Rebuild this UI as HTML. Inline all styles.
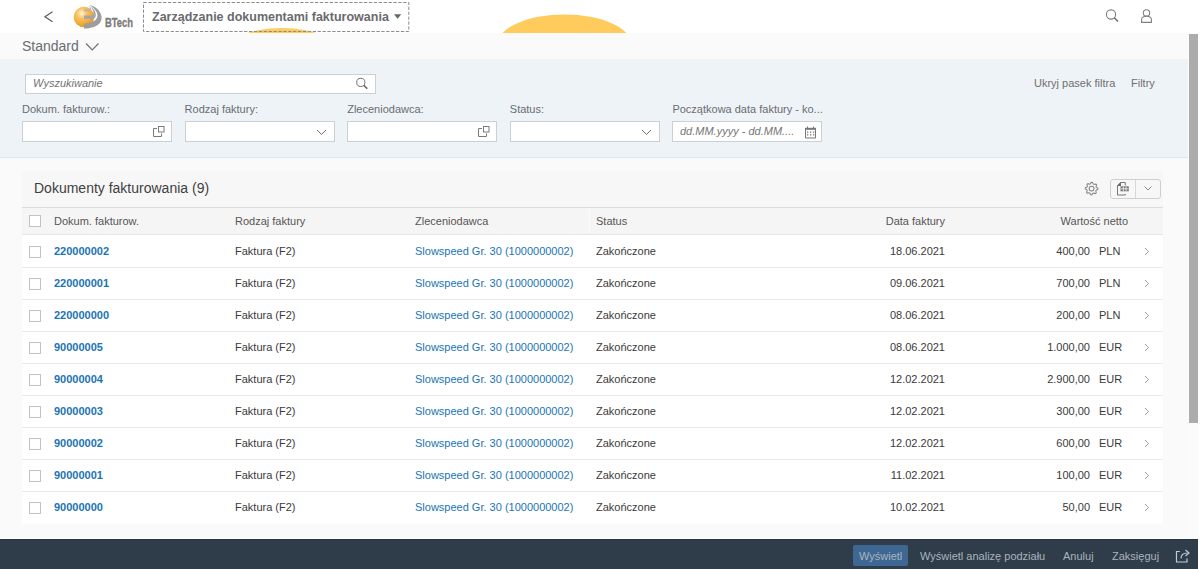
<!DOCTYPE html>
<html><head><meta charset="utf-8">
<style>
*{box-sizing:border-box;margin:0;padding:0}
html,body{width:1200px;height:569px;overflow:hidden;background:#fff;font-family:"Liberation Sans",sans-serif;color:#333}
.abs{position:absolute}
#hdr{position:absolute;left:0;top:0;width:1200px;height:33px;background:#fff;overflow:hidden}
#sub{position:absolute;left:0;top:33px;width:1188px;height:26px;background:#fafafa}
#fb{position:absolute;left:0;top:59px;width:1188px;height:99px;background:#eef3f8;border-bottom:1px solid #dde6ef}
#content{position:absolute;left:0;top:158px;width:1188px;height:382px;background:#fafafa}
#sbtrack{position:absolute;left:1188px;top:33px;width:10px;height:507px;background:#fbfbfb}
#sb{position:absolute;left:1189px;top:34px;width:9px;height:389px;background:#acacac}
.inp{position:absolute;height:21px;background:#fff;border:1px solid #cbd0d5}
.lbl{position:absolute;font-size:11px;color:#6a6d70;white-space:nowrap}
#tbl{position:absolute;left:22px;top:171px;width:1141px;height:352px;background:#fff}
#tbar{position:absolute;left:0;top:0;width:1141px;height:37px;background:#f7f7f7;border-bottom:1px solid #dcdcdc}
.row{position:absolute;left:0;width:1141px;height:32px;border-bottom:1px solid #e9e9e9;background:#fff}
.hrow{position:absolute;left:0;top:37px;width:1141px;height:27px;background:#f5f5f5;border-bottom:1px solid #e5e5e5}
.cb{position:absolute;left:7px;width:12px;height:12px;border:1px solid #c2c2c2;background:#fff}
.c{position:absolute;font-size:11px;white-space:nowrap;color:#3a3a3a}
.h{color:#555}
.lnk{color:#1b74b5}
.b{font-weight:bold}
.r{text-align:right}
#ftr{position:absolute;left:0;top:539px;width:1198px;height:30px;background:#2f3c49;border-top:1px solid #27343f}
.fbtn{position:absolute;top:6px;height:20px;line-height:20px;font-size:11px;color:#a8b4bf;white-space:nowrap}
</style></head><body>

<div id="hdr">
  <svg class="abs" style="left:0;top:0" width="1200" height="33" viewBox="0 0 1200 33">
    <ellipse cx="281.75" cy="59" rx="63" ry="31" fill="#fecb5c"/>
    <ellipse cx="564.5" cy="45.4" rx="67.6" ry="31" fill="#fecb5c"/>
  </svg>
  <svg class="abs" style="left:40px;top:8px" width="16" height="16" viewBox="0 0 16 16"><path d="M12.5 3.7 L5 8.7 L12.5 13.7" fill="none" stroke="#5f5f5f" stroke-width="1.3"/></svg>
  <svg class="abs" style="left:70px;top:0px" width="70" height="33" viewBox="0 0 70 33">
    <defs><radialGradient id="g1" cx="0.38" cy="0.33" r="0.75"><stop offset="0" stop-color="#fff3d6"/><stop offset="0.35" stop-color="#f9c15a"/><stop offset="0.8" stop-color="#eda12a"/><stop offset="1" stop-color="#e39420"/></radialGradient></defs>
    <circle cx="14" cy="17" r="10.3" fill="url(#g1)"/>
    <path d="M14 23.5 C20 23.5 26 21.5 27.3 17 C28.3 13 25 8 19 5 C27 6.5 31.6 12 31.6 18 C31.6 24.5 24 28.6 14 28.6 Z" fill="#9d9d9d"/>
    <path d="M14 15.4 L22.5 15.4 C24 14 24 10.5 20.5 6.5 C24.5 9 26.2 12.5 25.8 15.5 C25.5 17.5 24.5 19 22.5 19 L14 19 Z" fill="#a6a6a6"/>
    <path d="M14 9.6 L19 9.6 C20 8.5 20 7 19 5.5 C21 7 21.7 9.5 20.5 11.2 L14 11.2 Z" fill="#b5b5b5"/>
    <text x="35" y="27" font-family="Liberation Sans" font-weight="bold" font-size="13.2" fill="#7b7b7b" stroke="#7b7b7b" stroke-width="0.35" textLength="28" lengthAdjust="spacingAndGlyphs">BTech</text>
  </svg>
  <svg class="abs" style="left:143px;top:2px" width="268" height="31" viewBox="0 0 268 31"><rect x="0.5" y="0.5" width="265.3" height="29" fill="none" stroke="#8c8c8c" stroke-width="1" stroke-dasharray="3.3 1.6"/></svg>
  <div class="abs" style="left:152px;top:10px;font-size:12.5px;font-weight:bold;color:#6a6a6e;white-space:nowrap">Zarządzanie dokumentami fakturowania</div>
  <svg class="abs" style="left:393.5px;top:13.5px" width="8" height="6" viewBox="0 0 8 6"><path d="M0 0.3 H7.2 L3.6 4.8 Z" fill="#666"/></svg>
  <svg class="abs" style="left:1100px;top:4px" width="24" height="24" viewBox="0 0 24 24"><circle cx="11" cy="10.5" r="4.6" fill="none" stroke="#808080" stroke-width="1.1"/><path d="M14.3 13.8 L18 17.5" stroke="#707070" stroke-width="1.6"/></svg>
  <svg class="abs" style="left:1135px;top:4px" width="24" height="24" viewBox="0 0 24 24"><circle cx="11.5" cy="8.9" r="3.2" fill="none" stroke="#808080" stroke-width="1.1"/><path d="M6.6 18.4 V15.5 C6.6 13.3 8.6 12.2 11.5 12.2 C14.4 12.2 16.4 13.3 16.4 15.5 V18.4 Z" fill="none" stroke="#808080" stroke-width="1.1"/></svg>
</div>

<div id="sub">
  <div class="abs" style="left:22px;top:5px;font-size:14px;color:#6a6d70">Standard</div>
  <svg class="abs" style="left:85px;top:9px" width="15" height="10" viewBox="0 0 15 10"><path d="M1 1.5 L7.25 8 L13.5 1.5" fill="none" stroke="#6f6f6f" stroke-width="1.1"/></svg>
</div>

<div id="fb">
  <div class="inp" style="left:25px;top:15px;width:351px;height:20px"></div>
  <div class="lbl" style="left:33px;top:18px;font-style:italic;color:#747474">Wyszukiwanie</div>
  <svg class="abs" style="left:354px;top:17px" width="16" height="16" viewBox="0 0 16 16"><circle cx="6.8" cy="6.4" r="4.1" fill="none" stroke="#707070" stroke-width="1"/><path d="M9.7 9.3 L13.3 12.8" stroke="#606060" stroke-width="1.5"/></svg>
  <div class="lbl" style="left:1034px;top:18px;color:#707070">Ukryj pasek filtra</div>
  <div class="lbl" style="left:1131px;top:18px;color:#707070">Filtry</div>
  <div class="lbl" style="left:22.0px;top:44px">Dokum. fakturow.:</div>
  <div class="lbl" style="left:184.6px;top:44px">Rodzaj faktury:</div>
  <div class="lbl" style="left:347.2px;top:44px">Zleceniodawca:</div>
  <div class="lbl" style="left:509.8px;top:44px">Status:</div>
  <div class="lbl" style="left:672.4px;top:44px">Początkowa data faktury - ko...</div>
  <div class="inp" style="left:22.0px;top:62px;width:150px"><svg class="abs" style="left:129px;top:2.7px" width="14" height="13" viewBox="0 0 14 13"><rect x="6.5" y="1.5" width="5.5" height="5.5" fill="none" stroke="#7a7a7a" stroke-width="1"/><path d="M5 3.5 H1.5 V11.5 H9.5 V8.5" fill="none" stroke="#7a7a7a" stroke-width="1"/></svg></div>
  <div class="inp" style="left:184.6px;top:62px;width:150px"><svg class="abs" style="left:130.3px;top:5.7px" width="12" height="9" viewBox="0 0 12 9"><path d="M1 2 L5.5 6.4 L10 2" fill="none" stroke="#6f6f6f" stroke-width="1"/></svg></div>
  <div class="inp" style="left:347.2px;top:62px;width:150px"><svg class="abs" style="left:129px;top:2.7px" width="14" height="13" viewBox="0 0 14 13"><rect x="6.5" y="1.5" width="5.5" height="5.5" fill="none" stroke="#7a7a7a" stroke-width="1"/><path d="M5 3.5 H1.5 V11.5 H9.5 V8.5" fill="none" stroke="#7a7a7a" stroke-width="1"/></svg></div>
  <div class="inp" style="left:509.8px;top:62px;width:150px"><svg class="abs" style="left:130.3px;top:5.7px" width="12" height="9" viewBox="0 0 12 9"><path d="M1 2 L5.5 6.4 L10 2" fill="none" stroke="#6f6f6f" stroke-width="1"/></svg></div>
  <div class="inp" style="left:672.4px;top:62px;width:150px"><svg class="abs" style="left:130.5px;top:2.5px" width="13" height="14" viewBox="0 0 13 14"><path d="M1.5 3.5 H11.5 V13 H1.5 Z" fill="none" stroke="#777" stroke-width="1"/><rect x="1" y="2.8" width="11" height="2" fill="#777"/><path d="M3.5 1.5 V3 M9.5 1.5 V3" stroke="#777" stroke-width="1"/><g fill="#777"><rect x="3" y="6.5" width="1.3" height="1.3"/><rect x="6" y="6.5" width="1.3" height="1.3"/><rect x="9" y="6.5" width="1.3" height="1.3"/><rect x="3" y="9.2" width="1.3" height="1.3"/><rect x="6" y="9.2" width="1.3" height="1.3"/><rect x="9" y="9.2" width="1.3" height="1.3"/></g></svg></div>
  <div class="lbl" style="left:680px;top:66px;font-style:italic;color:#767676">dd.MM.yyyy - dd.MM....</div>
</div>

<div id="content"></div>
<div id="sbtrack"></div>
<div id="sb"></div>
<div id="tbl">
  <div id="tbar">
    <div class="abs" style="left:12px;top:9px;font-size:14px;color:#3f3f3f">Dokumenty fakturowania (9)</div>
    <svg class="abs" style="left:1058px;top:7px" width="24" height="22" viewBox="0 0 24 22"><path d="M11.29 4.31 L12.52 4.37 L13.25 5.99 L14.12 6.40 L15.83 5.93 L16.66 6.85 L16.03 8.50 L16.35 9.41 L17.89 10.29 L17.83 11.52 L16.21 12.25 L15.80 13.12 L16.27 14.83 L15.35 15.66 L13.70 15.03 L12.79 15.35 L11.91 16.89 L10.68 16.83 L9.95 15.21 L9.08 14.80 L7.37 15.27 L6.54 14.35 L7.17 12.70 L6.85 11.79 L5.31 10.91 L5.37 9.68 L6.99 8.95 L7.40 8.08 L6.93 6.37 L7.85 5.54 L9.50 6.17 L10.41 5.85 Z" fill="none" stroke="#858585" stroke-width="1.05" stroke-linejoin="round"/><circle cx="11.6" cy="10.6" r="2.4" fill="none" stroke="#858585" stroke-width="1.1"/></svg>
    <div class="abs" style="left:1088px;top:8px;width:51px;height:20px;border:1px solid #cfcfcf;border-radius:3px;background:#f7f7f7"></div>
    <div class="abs" style="left:1113px;top:9px;width:1px;height:18px;background:#d8d8d8"></div>
    <svg class="abs" style="left:1094px;top:10px" width="16" height="16" viewBox="0 0 16 16">
      <path d="M1.5 4.5 L4.5 1.5 H9.3 V4.5 M9.3 13 V14 H1.5 V4.5" fill="none" stroke="#777" stroke-width="1"/>
      <path d="M1 5 L5 1 V5 Z" fill="#6e6e6e"/>
      <rect x="4.5" y="5.3" width="8.3" height="5" fill="#777"/>
      <g stroke="#f7f7f7" stroke-width="0.8"><path d="M4.8 7.8 H12.5 M7.3 5.5 V10.2 M10 5.5 V10.2"/></g>
    </svg>
    <svg class="abs" style="left:1121px;top:13px" width="10" height="8" viewBox="0 0 10 8"><path d="M1.5 2.5 L5 6 L8.5 2.5" fill="none" stroke="#888" stroke-width="1"/></svg>
  </div>
  <div class="hrow">
    <div class="cb" style="top:7px"></div>
    <div class="c h" style="left:32px;top:7px">Dokum. fakturow.</div>
    <div class="c h" style="left:213px;top:7px">Rodzaj faktury</div>
    <div class="c h" style="left:393px;top:7px">Zleceniodawca</div>
    <div class="abs" style="left:567px;top:1px;width:1px;height:25px;background:#fcfcfc"></div>
    <div class="c h" style="left:574px;top:7px">Status</div>
    <div class="c h r" style="left:823px;width:100px;top:7px">Data faktury</div>
    <div class="c h r" style="left:1006px;width:100px;top:7px">Wartość netto</div>
  </div>
  <div class="row" style="top:65px">
    <div class="cb" style="top:10px"></div>
    <div class="c lnk b" style="left:32px;top:9px">220000002</div>
    <div class="c" style="left:213px;top:9px">Faktura (F2)</div>
    <div class="c lnk" style="left:393px;top:9px">Slowspeed Gr. 30 (1000000002)</div>
    <div class="c" style="left:574px;top:9px">Zakończone</div>
    <div class="c r" style="left:823px;width:100px;top:9px">18.06.2021</div>
    <div class="c r" style="left:968px;width:100px;top:9px">400,00</div>
    <div class="c" style="left:1077px;top:9px">PLN</div>
    <svg class="abs" style="left:1121px;top:11px" width="8" height="9" viewBox="0 0 8 9"><path d="M2 1 L5.5 4.5 L2 8" fill="none" stroke="#a0a0a0" stroke-width="1"/></svg>
  </div>
  <div class="row" style="top:97px">
    <div class="cb" style="top:10px"></div>
    <div class="c lnk b" style="left:32px;top:9px">220000001</div>
    <div class="c" style="left:213px;top:9px">Faktura (F2)</div>
    <div class="c lnk" style="left:393px;top:9px">Slowspeed Gr. 30 (1000000002)</div>
    <div class="c" style="left:574px;top:9px">Zakończone</div>
    <div class="c r" style="left:823px;width:100px;top:9px">09.06.2021</div>
    <div class="c r" style="left:968px;width:100px;top:9px">700,00</div>
    <div class="c" style="left:1077px;top:9px">PLN</div>
    <svg class="abs" style="left:1121px;top:11px" width="8" height="9" viewBox="0 0 8 9"><path d="M2 1 L5.5 4.5 L2 8" fill="none" stroke="#a0a0a0" stroke-width="1"/></svg>
  </div>
  <div class="row" style="top:129px">
    <div class="cb" style="top:10px"></div>
    <div class="c lnk b" style="left:32px;top:9px">220000000</div>
    <div class="c" style="left:213px;top:9px">Faktura (F2)</div>
    <div class="c lnk" style="left:393px;top:9px">Slowspeed Gr. 30 (1000000002)</div>
    <div class="c" style="left:574px;top:9px">Zakończone</div>
    <div class="c r" style="left:823px;width:100px;top:9px">08.06.2021</div>
    <div class="c r" style="left:968px;width:100px;top:9px">200,00</div>
    <div class="c" style="left:1077px;top:9px">PLN</div>
    <svg class="abs" style="left:1121px;top:11px" width="8" height="9" viewBox="0 0 8 9"><path d="M2 1 L5.5 4.5 L2 8" fill="none" stroke="#a0a0a0" stroke-width="1"/></svg>
  </div>
  <div class="row" style="top:161px">
    <div class="cb" style="top:10px"></div>
    <div class="c lnk b" style="left:32px;top:9px">90000005</div>
    <div class="c" style="left:213px;top:9px">Faktura (F2)</div>
    <div class="c lnk" style="left:393px;top:9px">Slowspeed Gr. 30 (1000000002)</div>
    <div class="c" style="left:574px;top:9px">Zakończone</div>
    <div class="c r" style="left:823px;width:100px;top:9px">08.06.2021</div>
    <div class="c r" style="left:968px;width:100px;top:9px">1.000,00</div>
    <div class="c" style="left:1077px;top:9px">EUR</div>
    <svg class="abs" style="left:1121px;top:11px" width="8" height="9" viewBox="0 0 8 9"><path d="M2 1 L5.5 4.5 L2 8" fill="none" stroke="#a0a0a0" stroke-width="1"/></svg>
  </div>
  <div class="row" style="top:193px">
    <div class="cb" style="top:10px"></div>
    <div class="c lnk b" style="left:32px;top:9px">90000004</div>
    <div class="c" style="left:213px;top:9px">Faktura (F2)</div>
    <div class="c lnk" style="left:393px;top:9px">Slowspeed Gr. 30 (1000000002)</div>
    <div class="c" style="left:574px;top:9px">Zakończone</div>
    <div class="c r" style="left:823px;width:100px;top:9px">12.02.2021</div>
    <div class="c r" style="left:968px;width:100px;top:9px">2.900,00</div>
    <div class="c" style="left:1077px;top:9px">EUR</div>
    <svg class="abs" style="left:1121px;top:11px" width="8" height="9" viewBox="0 0 8 9"><path d="M2 1 L5.5 4.5 L2 8" fill="none" stroke="#a0a0a0" stroke-width="1"/></svg>
  </div>
  <div class="row" style="top:225px">
    <div class="cb" style="top:10px"></div>
    <div class="c lnk b" style="left:32px;top:9px">90000003</div>
    <div class="c" style="left:213px;top:9px">Faktura (F2)</div>
    <div class="c lnk" style="left:393px;top:9px">Slowspeed Gr. 30 (1000000002)</div>
    <div class="c" style="left:574px;top:9px">Zakończone</div>
    <div class="c r" style="left:823px;width:100px;top:9px">12.02.2021</div>
    <div class="c r" style="left:968px;width:100px;top:9px">300,00</div>
    <div class="c" style="left:1077px;top:9px">EUR</div>
    <svg class="abs" style="left:1121px;top:11px" width="8" height="9" viewBox="0 0 8 9"><path d="M2 1 L5.5 4.5 L2 8" fill="none" stroke="#a0a0a0" stroke-width="1"/></svg>
  </div>
  <div class="row" style="top:257px">
    <div class="cb" style="top:10px"></div>
    <div class="c lnk b" style="left:32px;top:9px">90000002</div>
    <div class="c" style="left:213px;top:9px">Faktura (F2)</div>
    <div class="c lnk" style="left:393px;top:9px">Slowspeed Gr. 30 (1000000002)</div>
    <div class="c" style="left:574px;top:9px">Zakończone</div>
    <div class="c r" style="left:823px;width:100px;top:9px">12.02.2021</div>
    <div class="c r" style="left:968px;width:100px;top:9px">600,00</div>
    <div class="c" style="left:1077px;top:9px">EUR</div>
    <svg class="abs" style="left:1121px;top:11px" width="8" height="9" viewBox="0 0 8 9"><path d="M2 1 L5.5 4.5 L2 8" fill="none" stroke="#a0a0a0" stroke-width="1"/></svg>
  </div>
  <div class="row" style="top:289px">
    <div class="cb" style="top:10px"></div>
    <div class="c lnk b" style="left:32px;top:9px">90000001</div>
    <div class="c" style="left:213px;top:9px">Faktura (F2)</div>
    <div class="c lnk" style="left:393px;top:9px">Slowspeed Gr. 30 (1000000002)</div>
    <div class="c" style="left:574px;top:9px">Zakończone</div>
    <div class="c r" style="left:823px;width:100px;top:9px">11.02.2021</div>
    <div class="c r" style="left:968px;width:100px;top:9px">100,00</div>
    <div class="c" style="left:1077px;top:9px">EUR</div>
    <svg class="abs" style="left:1121px;top:11px" width="8" height="9" viewBox="0 0 8 9"><path d="M2 1 L5.5 4.5 L2 8" fill="none" stroke="#a0a0a0" stroke-width="1"/></svg>
  </div>
  <div class="row" style="top:321px;border-bottom:none">
    <div class="cb" style="top:10px"></div>
    <div class="c lnk b" style="left:32px;top:9px">90000000</div>
    <div class="c" style="left:213px;top:9px">Faktura (F2)</div>
    <div class="c lnk" style="left:393px;top:9px">Slowspeed Gr. 30 (1000000002)</div>
    <div class="c" style="left:574px;top:9px">Zakończone</div>
    <div class="c r" style="left:823px;width:100px;top:9px">10.02.2021</div>
    <div class="c r" style="left:968px;width:100px;top:9px">50,00</div>
    <div class="c" style="left:1077px;top:9px">EUR</div>
    <svg class="abs" style="left:1121px;top:11px" width="8" height="9" viewBox="0 0 8 9"><path d="M2 1 L5.5 4.5 L2 8" fill="none" stroke="#a0a0a0" stroke-width="1"/></svg>
  </div>
</div>

<div class="abs" style="left:0;top:538px;width:1188px;height:1px;background:#fff"></div>
<div id="ftr">
  <div class="abs" style="left:853px;top:5px;width:55px;height:21px;background:#3e6893;border-radius:2px"></div>
  <div class="fbtn" style="left:859px">Wyświetl</div>
  <div class="fbtn" style="left:920px">Wyświetl analizę podziału</div>
  <div class="fbtn" style="left:1063px">Anuluj</div>
  <div class="fbtn" style="left:1112px">Zaksięguj</div>
  <svg class="abs" style="left:1172px;top:7px" width="20" height="18" viewBox="0 0 20 18"><path d="M7.8 4.5 H4.5 V15 H15 V11.5" fill="none" stroke="#b9cde0" stroke-width="1.2"/><path d="M9 11.5 C9 8 11.5 6 15.5 6" fill="none" stroke="#b9cde0" stroke-width="1.2"/><path d="M13.5 3 L17 6 L13.5 9" fill="none" stroke="#b9cde0" stroke-width="1.2"/></svg>
</div>
</body></html>
